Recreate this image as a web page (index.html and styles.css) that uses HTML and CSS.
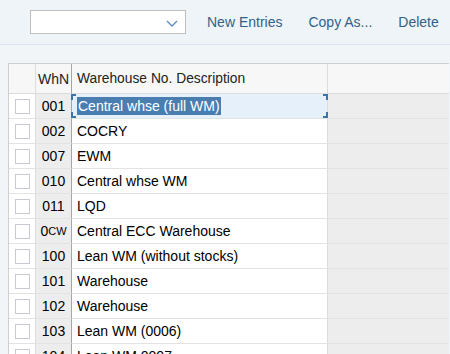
FILE: index.html
```html
<!DOCTYPE html>
<html lang="en">

<head>
    <meta charset="UTF-8">
    <meta name="viewport" content="width=device-width, initial-scale=1.0">
    <title>Warehouse Numbers</title>
    <link rel="stylesheet" href="styles.css">
</head>

<body>

    <div class="toolbar">
        <div class="select">
            <svg class="chevron" width="12" height="7" viewBox="0 0 12 7">
                <polyline points="1,1 6,6 11,1" fill="none" stroke="#5a8bc0" stroke-width="1.3"/>
            </svg>
        </div>
        <button class="action first">New Entries</button>
        <button class="action">Copy As...</button>
        <button class="action">Delete</button>
    </div>

    <div class="content">
        <div class="table">
            <div class="row head">
                <div class="cell sel"></div>
                <div class="cell key">WhN</div>
                <div class="cell desc">Warehouse No. Description</div>
                <div class="cell fill"></div>
            </div>
            <div class="row">
                <div class="cell sel"><span class="box"></span></div>
                <div class="cell key">001</div>
                <div class="cell desc focus"><span class="marked">Central whse (full WM)</span></div>
                <div class="cell fill"></div>
            </div>
            <div class="row">
                <div class="cell sel"><span class="box"></span></div>
                <div class="cell key">002</div>
                <div class="cell desc">COCRY</div>
                <div class="cell fill"></div>
            </div>
            <div class="row">
                <div class="cell sel"><span class="box"></span></div>
                <div class="cell key">007</div>
                <div class="cell desc">EWM</div>
                <div class="cell fill"></div>
            </div>
            <div class="row">
                <div class="cell sel"><span class="box"></span></div>
                <div class="cell key">010</div>
                <div class="cell desc">Central whse WM</div>
                <div class="cell fill"></div>
            </div>
            <div class="row">
                <div class="cell sel"><span class="box"></span></div>
                <div class="cell key">011</div>
                <div class="cell desc">LQD</div>
                <div class="cell fill"></div>
            </div>
            <div class="row">
                <div class="cell sel"><span class="box"></span></div>
                <div class="cell key">0<span class="small">CW</span></div>
                <div class="cell desc">Central ECC Warehouse</div>
                <div class="cell fill"></div>
            </div>
            <div class="row">
                <div class="cell sel"><span class="box"></span></div>
                <div class="cell key">100</div>
                <div class="cell desc">Lean WM (without stocks)</div>
                <div class="cell fill"></div>
            </div>
            <div class="row">
                <div class="cell sel"><span class="box"></span></div>
                <div class="cell key">101</div>
                <div class="cell desc">Warehouse</div>
                <div class="cell fill"></div>
            </div>
            <div class="row">
                <div class="cell sel"><span class="box"></span></div>
                <div class="cell key">102</div>
                <div class="cell desc">Warehouse</div>
                <div class="cell fill"></div>
            </div>
            <div class="row">
                <div class="cell sel"><span class="box"></span></div>
                <div class="cell key">103</div>
                <div class="cell desc">Lean WM (0006)</div>
                <div class="cell fill"></div>
            </div>
            <div class="row">
                <div class="cell sel"><span class="box"></span></div>
                <div class="cell key">104</div>
                <div class="cell desc">Lean WM 0007</div>
                <div class="cell fill"></div>
            </div>
        </div>
    </div>

</body>
</html>
```

FILE: styles.css
```css
body {
    font-family: 'Liberation Sans', Arial, sans-serif;
    background-color: #f2f5f8;
    margin: 0;
    overflow: hidden;
}

.toolbar {
    display: flex;
    align-items: center;
    height: 44px;
    padding-left: 30px;
    background-color: #eff4f9;
    border-bottom: 1px solid #d8e3ed;
}

.select {
    position: relative;
    flex-shrink: 0;
    width: 154px;
    height: 22px;
    background-color: #ffffff;
    border: 1px solid #bfbfbf;
}

.chevron {
    position: absolute;
    right: 7px;
    top: 9px;
}

.action {
    flex-shrink: 0;
    white-space: nowrap;
    background: none;
    border: none;
    padding: 0 13px;
    font-family: inherit;
    font-size: 14px;
    color: #346187;
    cursor: pointer;
}

.action.first {
    margin-left: 8px;
}

.content {
    padding: 18px 0 0 8px;
}

.table {
    border-top: 1px solid #cfcfcf;
    border-left: 1px solid #cfcfcf;
    width: 440px;
}

.row {
    display: grid;
    grid-template-columns: 27px 36px 256px 121px;
    height: 25px;
}

.row.head {
    height: 30px;
    background-color: #f7f7f7;
}

.cell {
    display: flex;
    align-items: center;
    font-size: 14px;
    color: #000000;
    border-bottom: 1px solid #e3e3e3;
    box-sizing: border-box;
    white-space: nowrap;
    overflow: hidden;
}

.head .cell {
    border-bottom-color: #dcdcdc;
    color: #222222;
}

.sel {
    justify-content: center;
    background-color: #ffffff;
    border-right: 1px solid #dcdcdc;
}

.head .sel {
    background-color: #f7f7f7;
}

.box {
    width: 13px;
    height: 13px;
    background-color: #ffffff;
    border: 1px solid #c9c9d4;
}

.key {
    justify-content: center;
    background-color: #ededed;
    border-right: 1px solid #a6a6a6;
}

.key .small {
    font-size: 11px;
}

.head .key {
    background-color: #f7f7f7;
    justify-content: flex-start;
    padding-left: 2px;
}

.desc {
    padding-left: 5px;
    background-color: #ffffff;
    border-right: 1px solid #dcdcdc;
}

.head .desc {
    background-color: #f7f7f7;
    font-size: 13.8px;
}

.fill {
    background-color: #ededed;
    border-bottom-color: #e2e2e2;
}

.head .fill {
    background-color: #f7f7f7;
}

.desc.focus {
    position: relative;
    overflow: visible;
    background-color: #e5f0fa;
}

/* focus corner brackets around the active cell */
.focus::before {
    content: "";
    position: absolute;
    left: -1px;
    top: 0;
    width: 257px;
    height: 24px;
    background:
        linear-gradient(#3f74aa, #3f74aa) left top / 5px 2px no-repeat,
        linear-gradient(#3f74aa, #3f74aa) left top / 2px 6px no-repeat,
        linear-gradient(#3f74aa, #3f74aa) left bottom / 5px 2px no-repeat,
        linear-gradient(#3f74aa, #3f74aa) left bottom / 2px 6px no-repeat,
        linear-gradient(#3f74aa, #3f74aa) right top / 5px 2px no-repeat,
        linear-gradient(#3f74aa, #3f74aa) right top / 2px 6px no-repeat,
        linear-gradient(#3f74aa, #3f74aa) right bottom / 5px 2px no-repeat,
        linear-gradient(#3f74aa, #3f74aa) right bottom / 2px 6px no-repeat;
}

.marked {
    background-color: #4a7eb1;
    color: #ffffff;
    padding: 1px 1px;
}
```
